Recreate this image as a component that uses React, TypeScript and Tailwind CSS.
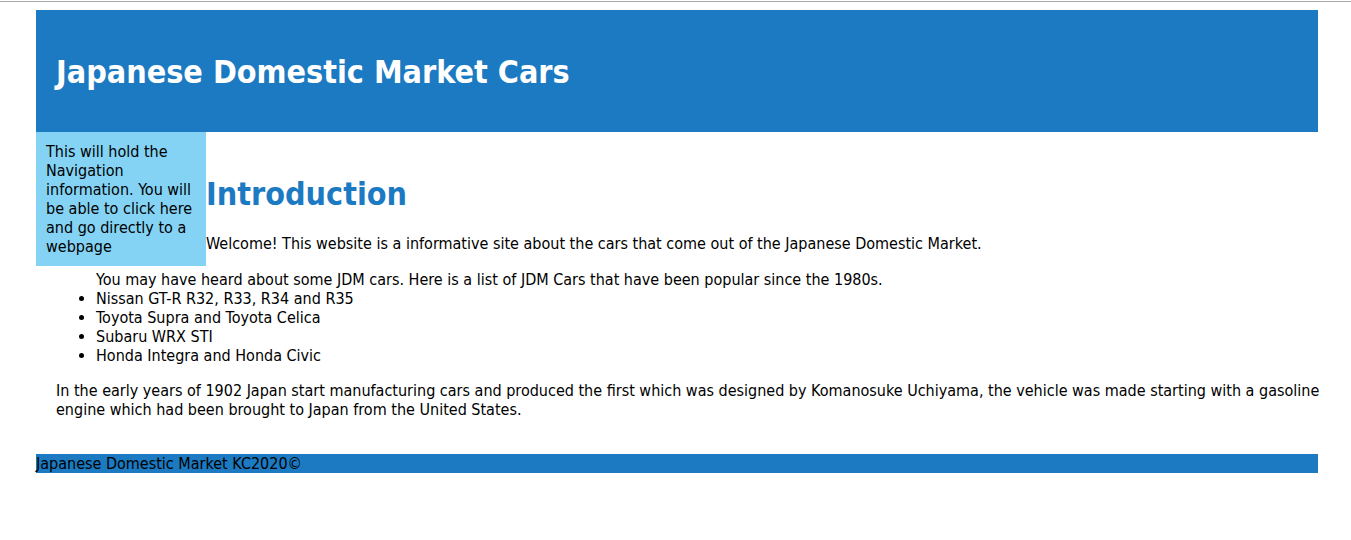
import React from "react";

const cars: string[] = [
  "Nissan GT-R R32, R33, R34 and R35",
  "Toyota Supra and Toyota Celica",
  "Subaru WRX STI",
  "Honda Integra and Honda Civic",
];

export default function App() {
  return (
    <div className="mt-px border-t border-[#a9a9a9] pt-2 pr-[33px] pl-9 font-[Tahoma,'DejaVu_Sans_Condensed','DejaVu_Sans',sans-serif] text-[16px] leading-[19px] text-black">
      <header className="bg-[#1b7ac2] px-5 pt-[42px] pb-10">
        <h1 className="text-[32px] leading-[40px] font-bold text-white">Japanese Domestic Market Cars</h1>
      </header>

      <main>
        <div className="flex items-start">
          <nav className="w-[170px] shrink-0 bg-[#84d3f5] p-2.5">
            This will hold the Navigation information. You will be able to click here and go directly to a webpage
          </nav>
          <section className="flex-1 pt-[42px] pr-5">
            <h1 className="mb-5 text-[32px] leading-[40px] font-bold text-[#1b7ac2]">Introduction</h1>
            <p>Welcome! This website is a informative site about the cars that come out of the Japanese Domestic Market.</p>
          </section>
        </div>

        <div className="-mr-3 pt-1 pb-[35px] pl-5">
          <div className="mb-4 pl-10">
            <p>You may have heard about some JDM cars. Here is a list of JDM Cars that have been popular since the 1980s.</p>
            <ul className="list-disc">
              {cars.map((car) => (
                <li key={car}>{car}</li>
              ))}
            </ul>
          </div>
          <p>
            In the early years of 1902 Japan start manufacturing cars and produced the first which was designed by
            Komanosuke Uchiyama, the vehicle was made starting with a gasoline engine which had been brought to Japan
            from the United States.
          </p>
        </div>
      </main>

      <footer className="bg-[#1b7ac2]">Japanese Domestic Market KC2020©</footer>
    </div>
  );
}
